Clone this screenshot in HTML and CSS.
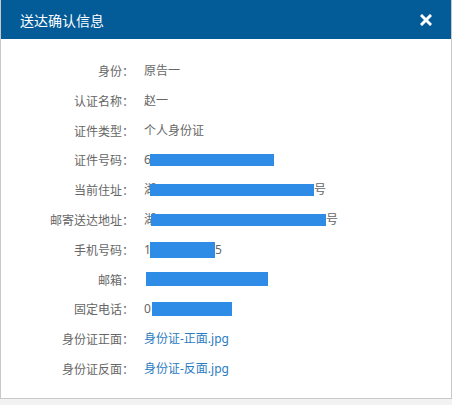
FILE: index.html
```html
<!DOCTYPE html>
<html lang="zh-CN">
<head>
    <meta charset="UTF-8">
    <title>送达确认信息</title>
    <link rel="stylesheet" href="styles.css">
</head>
<body>

    <!-- Dialog -->
    <div class="dialog">
        <div class="dialog-header">
            <span class="dialog-title">送达确认信息</span>
            <span class="dialog-close">
                <svg width="12" height="12" viewBox="0 0 12 12">
                    <path d="M2 2 L10 10 M10 2 L2 10" stroke="#fff" stroke-width="3" stroke-linecap="square"/>
                </svg>
            </span>
        </div>

        <div class="dialog-body">
            <div class="row"><span class="label">身份：</span><span class="value">原告一</span></div>
            <div class="row"><span class="label">认证名称：</span><span class="value">赵一</span></div>
            <div class="row"><span class="label">证件类型：</span><span class="value">个人身份证</span></div>
            <div class="row"><span class="label">证件号码：</span><span class="value">6<span class="mask" style="width:124px;margin-left:-1px"></span></span></div>
            <div class="row"><span class="label">当前住址：</span><span class="value">湖<span class="mask" style="width:164px;margin-left:-6px"></span>号</span></div>
            <div class="row"><span class="label">邮寄送达地址：</span><span class="value">湖<span class="mask" style="width:175px;margin-left:-5px"></span>号</span></div>
            <div class="row"><span class="label">手机号码：</span><span class="value">1<span class="mask mask-tall" style="width:65px;margin-left:-1px"></span>5</span></div>
            <div class="row"><span class="label">邮箱：</span><span class="value"><span class="mask mask-mid" style="width:122px;margin-left:2px"></span></span></div>
            <div class="row"><span class="label">固定电话：</span><span class="value">0<span class="mask mask-mid" style="width:80px;margin-left:1px"></span></span></div>
            <div class="row"><span class="label">身份证正面：</span><a class="value file-link" href="#">身份证-正面.jpg</a></div>
            <div class="row"><span class="label">身份证反面：</span><a class="value file-link" href="#">身份证-反面.jpg</a></div>
        </div>
    </div>

</body>
</html>
```

FILE: styles.css
```css
/* General Styles */
body {
    margin: 0;
    background-color: #f2f2f2;
    font-family: "Noto Sans", "Noto Sans CJK SC", sans-serif;
    font-size: 12px;
    color: #666;
}

/* Dialog */
.dialog {
    width: 450px;
    height: 398px;
    background: white;
    border: 1px solid #c9c9c9;
    border-top: none;
    box-shadow: 0 1px 4px rgba(0,0,0,0.12);
}

.dialog-header {
    height: 39px;
    background: #035b98;
    display: flex;
    align-items: center;
    justify-content: space-between;
    padding: 0 19px 0 19px;
}

.dialog-title {
    color: white;
    font-family: "Noto Sans CJK SC", sans-serif;
    font-size: 14px;
    line-height: 20px;
}

.dialog-close {
    display: flex;
    width: 12px;
    height: 12px;
    cursor: pointer;
}

/* Body rows */
.dialog-body {
    padding-top: 17px;
}

.row {
    display: flex;
    height: 29.8px;
    line-height: 29.8px;
    white-space: nowrap;
}

.label {
    width: 133px;
    text-align: right;
    font-family: "Noto Sans CJK SC", sans-serif;
}

.value {
    margin-left: 10px;
    display: flex;
    align-items: center;
}

.mask {
    display: inline-block;
    height: 12px;
    background: #2e8be6;
}

.mask-mid { height: 14px; }
.mask-tall { height: 16px; }

.file-link {
    color: #2b7bbf;
    text-decoration: none;
}
```
